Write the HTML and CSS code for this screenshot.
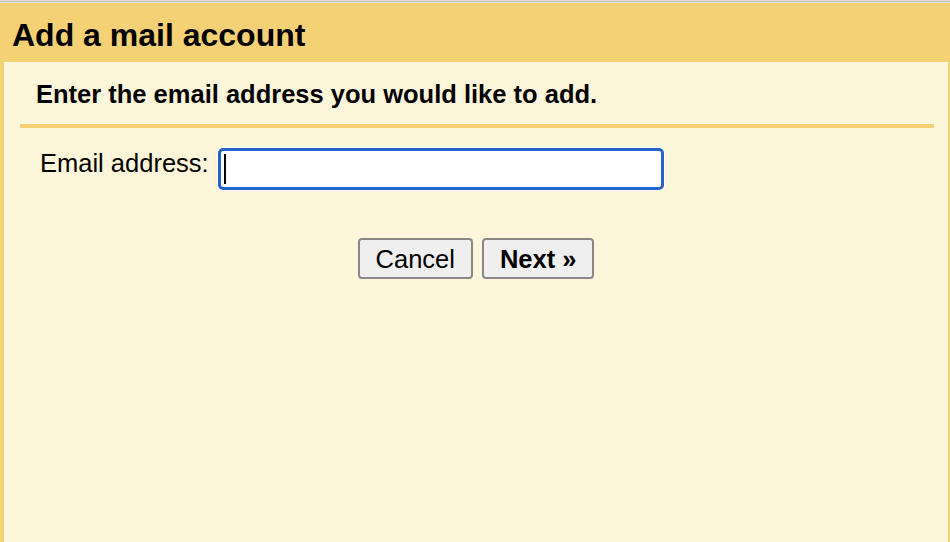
FILE: index.html
```html
<!DOCTYPE html>
<html lang="en">
<head>
<meta charset="utf-8">
<title>Add a mail account</title>
<link rel="stylesheet" href="styles.css">
</head>
<body>
<div class="topline"></div>
<div class="dialog">
  <header class="header">
    <h1 class="title">Add a mail account</h1>
  </header>
  <main class="panel">
    <p class="lead">Enter the email address you would like to add.</p>
    <div class="rule"></div>
    <div class="field-row">
      <label class="label" for="email">Email address:</label>
      <div class="input" id="email" role="textbox" tabindex="0"><span class="caret"></span></div>
    </div>
    <div class="actions">
      <button class="btn" type="button">Cancel</button>
      <button class="btn btn-primary" type="button">Next »</button>
    </div>
  </main>
</div>
</body>
</html>
```

FILE: styles.css
```css
html, body {
  margin: 0;
  padding: 0;
  height: 100%;
}

body {
  font-family: "Liberation Sans", Arial, sans-serif;
  color: #000;
  background: #f5d176;
  display: flex;
  flex-direction: column;
  overflow: hidden;
}

.topline {
  height: 3px;
  background: linear-gradient(to bottom, #dcdcdc 0, #dcdcdc 1px, #c3c3c3 1px, #c3c3c3 2px, #e4e4e4 2px);
  flex: none;
}

.dialog {
  flex: 1;
  display: flex;
  flex-direction: column;
  background: #f5d176;
}

.header {
  height: 59px;
  box-sizing: border-box;
  padding: 14px 0 0 12px;
  flex: none;
}

.title {
  margin: 0;
  font-size: 32px;
  line-height: 37px;
  font-weight: bold;
}

.panel {
  flex: 1;
  margin: 0 2px 0 4px;
  background: #fef6da;
  padding-top: 17px;
}

.lead {
  margin: 0;
  padding-left: 32px;
  font-size: 25.5px;
  line-height: 30px;
  font-weight: bold;
}

.rule {
  height: 4px;
  background: #f5d176;
  margin: 15px 14px 0 16px;
}

.field-row {
  display: flex;
  align-items: flex-start;
  margin-top: 20px;
  padding-left: 36px;
}

.label {
  font-size: 25.5px;
  line-height: 30px;
  margin-top: 0;
  margin-right: 9px;
}

.input {
  width: 446px;
  height: 42px;
  box-sizing: border-box;
  border: 3px solid #2664c9;
  border-radius: 5px;
  background: #fff;
  box-shadow: 0 0 0 1px rgba(255, 255, 255, 0.8);
  padding: 3px 0 0 3px;
  outline: none;
}

.caret {
  display: block;
  width: 2px;
  height: 30px;
  background: #000;
}

.actions {
  display: flex;
  justify-content: center;
  gap: 9px;
  margin-top: 48px;
}

.btn {
  font-family: "Liberation Sans", Arial, sans-serif;
  font-size: 25.5px;
  height: 41px;
  padding: 2px 16px 0;
  border: 2px solid #888;
  border-radius: 4px;
  background: #efefef;
  color: #000;
  line-height: 1;
}

.btn-primary {
  font-weight: bold;
}
```
